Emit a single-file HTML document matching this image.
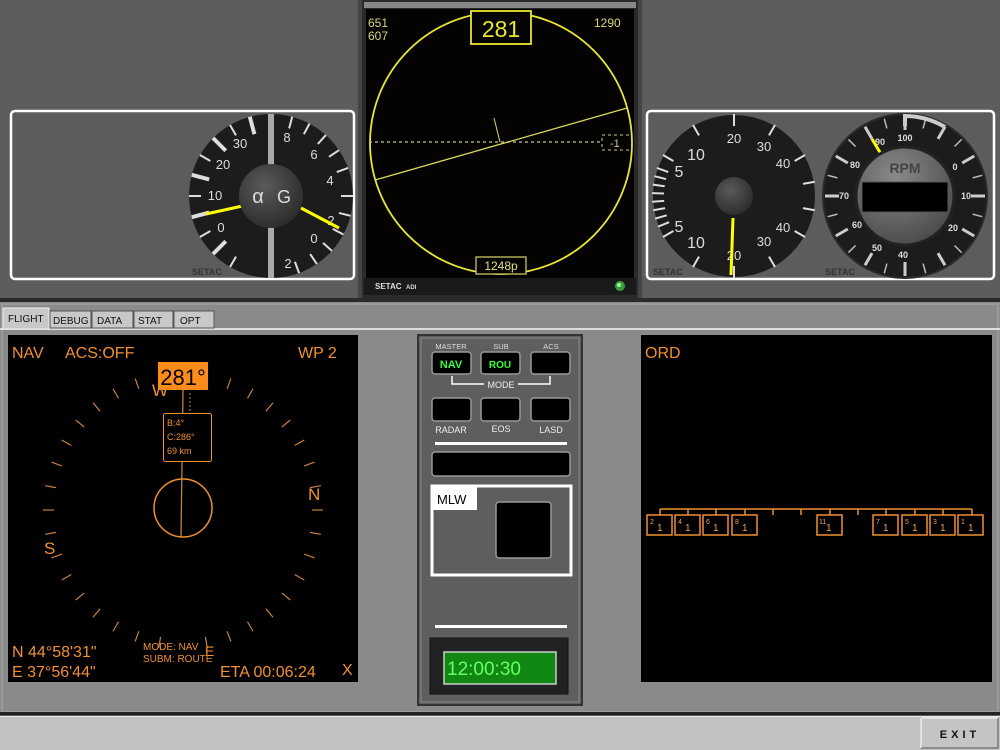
<!DOCTYPE html>
<html><head><meta charset="utf-8"><style>
html,body{margin:0;padding:0;background:#5c5c5c;}
svg{display:block;font-family:"Liberation Sans",sans-serif;}
</style></head><body>
<svg width="1000" height="750" viewBox="0 0 1000 750" xmlns="http://www.w3.org/2000/svg">
<defs>
<line id="ct" x1="183" y1="370" x2="183" y2="381" stroke="#c8803a" stroke-width="1.2"/>
<line id="gt" x1="0" y1="-82" x2="0" y2="-70" stroke="#ddd" stroke-width="2"/>
<line id="gT" x1="0" y1="-82" x2="0" y2="-64" stroke="#ddd" stroke-width="4"/>
<line id="rt" x1="0" y1="-80" x2="0" y2="-70" stroke="#bbb" stroke-width="1.5"/>
<line id="rT" x1="0" y1="-80" x2="0" y2="-66" stroke="#ccc" stroke-width="3"/>
<radialGradient id="knob" cx="0.4" cy="0.35" r="0.7"><stop offset="0" stop-color="#5a5a5a"/><stop offset="1" stop-color="#2a2a2a"/></radialGradient>
<radialGradient id="disc" cx="0.4" cy="0.3" r="0.8"><stop offset="0" stop-color="#8a8a8a"/><stop offset="1" stop-color="#444"/></radialGradient>
</defs>
<rect x="0" y="0" width="1000" height="300" fill="#5d5d5d"/>
<rect x="358" y="0" width="4" height="300" fill="#444"/>
<rect x="638" y="0" width="4" height="300" fill="#444"/>
<rect x="0" y="298" width="1000" height="4" fill="#2a2a2a"/>

<rect x="11" y="111" width="343" height="168" rx="4" fill="#5c5c5c" stroke="#fff" stroke-width="2.5"/>
<g transform="translate(271,196)">
<circle r="82" fill="#1c1c1c"/>
<g>
<use href="#gt" transform="rotate(-150)"/><use href="#gT" transform="rotate(-135)"/><use href="#gt" transform="rotate(-120)"/><use href="#gT" transform="rotate(-105)"/><use href="#gt" transform="rotate(-90)"/><use href="#gT" transform="rotate(-75)"/><use href="#gt" transform="rotate(-60)"/><use href="#gT" transform="rotate(-45)"/><use href="#gt" transform="rotate(-30)"/><use href="#gT" transform="rotate(-15)"/>
<use href="#gt" transform="rotate(15)"/><use href="#gt" transform="rotate(28)"/><use href="#gt" transform="rotate(42)"/><use href="#gt" transform="rotate(56)"/><use href="#gt" transform="rotate(70)"/><use href="#gt" transform="rotate(90)"/><use href="#gt" transform="rotate(104)"/><use href="#gt" transform="rotate(118)"/><use href="#gt" transform="rotate(132)"/><use href="#gt" transform="rotate(146)"/><use href="#gt" transform="rotate(160)"/>
</g>
<rect x="-3" y="-82" width="6" height="164" fill="#aaa"/>
<g fill="#ddd" font-size="13" text-anchor="middle">
<text x="-31" y="-48">30</text><text x="-48" y="-27">20</text><text x="-56" y="4">10</text><text x="-50" y="36">0</text>
<text x="16" y="-54">8</text><text x="43" y="-37">6</text><text x="59" y="-11">4</text><text x="60" y="29">2</text><text x="43" y="47">0</text><text x="17" y="72">2</text>
</g>
<line x1="-24" y1="9" x2="-65" y2="18" stroke="#ff0" stroke-width="3"/>
<line x1="30" y1="12" x2="68" y2="32" stroke="#ff0" stroke-width="3"/>
<circle r="32" fill="url(#knob)"/>
<text x="-13" y="7" fill="#ddd" font-size="20" text-anchor="middle">α</text>
<text x="13" y="7" fill="#ddd" font-size="18" text-anchor="middle">G</text>
</g>
<text x="192" y="275" fill="#333" font-size="9" font-weight="bold">SETAC</text>

<rect x="647" y="111" width="347" height="168" rx="4" fill="#5c5c5c" stroke="#fff" stroke-width="2.5"/>
<g transform="translate(734,196)">
<circle r="81" fill="#1c1c1c"/>
<use href="#gt" transform="rotate(0)"/><use href="#gt" transform="rotate(30)"/><use href="#gt" transform="rotate(60)"/><use href="#gt" transform="rotate(80)"/><use href="#gt" transform="rotate(100)"/><use href="#gt" transform="rotate(120)"/><use href="#gt" transform="rotate(150)"/><use href="#gt" transform="rotate(180)"/><use href="#gt" transform="rotate(-30)"/><use href="#gt" transform="rotate(-60)"/><use href="#gt" transform="rotate(-70)"/><use href="#gt" transform="rotate(-76)"/><use href="#gt" transform="rotate(-82)"/><use href="#gt" transform="rotate(-88)"/><use href="#gt" transform="rotate(-94)"/><use href="#gt" transform="rotate(-100)"/><use href="#gt" transform="rotate(-106)"/><use href="#gt" transform="rotate(-112)"/><use href="#gt" transform="rotate(-120)"/><use href="#gt" transform="rotate(-150)"/>
<g fill="#ddd" font-size="13" text-anchor="middle">
<text x="0" y="-53">20</text><text x="30" y="-45">30</text><text x="49" y="-28">40</text>
<text x="-38" y="-36" font-size="16">10</text><text x="-55" y="-19" font-size="16">5</text><text x="-55" y="36" font-size="16">5</text><text x="-38" y="52" font-size="16">10</text>
<text x="0" y="64">20</text><text x="30" y="50">30</text><text x="49" y="36">40</text>
</g>
<circle r="19" fill="url(#knob)"/>
<line x1="-1" y1="22" x2="-3" y2="79" stroke="#ff0" stroke-width="3"/>
</g>
<text x="653" y="275" fill="#333" font-size="9" font-weight="bold">SETAC</text>
<g transform="translate(905,196)">
<circle r="82" fill="#1c1c1c" stroke="#2a2a2a" stroke-width="2"/>
<use href="#rT" transform="rotate(0)"/><use href="#rT" transform="rotate(30)"/><use href="#rT" transform="rotate(60)"/><use href="#rT" transform="rotate(90)"/><use href="#rT" transform="rotate(120)"/><use href="#rT" transform="rotate(150)"/><use href="#rT" transform="rotate(180)"/><use href="#rT" transform="rotate(-30)"/><use href="#rT" transform="rotate(-60)"/><use href="#rT" transform="rotate(-90)"/><use href="#rT" transform="rotate(-120)"/><use href="#rT" transform="rotate(-150)"/>
<use href="#rt" transform="rotate(15)"/><use href="#rt" transform="rotate(45)"/><use href="#rt" transform="rotate(75)"/><use href="#rt" transform="rotate(105)"/><use href="#rt" transform="rotate(135)"/><use href="#rt" transform="rotate(165)"/><use href="#rt" transform="rotate(-15)"/><use href="#rt" transform="rotate(-45)"/><use href="#rt" transform="rotate(-75)"/><use href="#rt" transform="rotate(-105)"/><use href="#rt" transform="rotate(-135)"/><use href="#rt" transform="rotate(-165)"/>
<path d="M0,-70 L0,-80 A80,80 0 0 1 40,-69" stroke="#ccc" stroke-width="4" fill="none"/>
<g fill="#ddd" font-size="9" font-weight="bold" text-anchor="middle">
<text x="0" y="-55">100</text><text x="50" y="-26">0</text><text x="61" y="3">10</text><text x="48" y="35">20</text><text x="-2" y="62">40</text><text x="-28" y="55">50</text><text x="-48" y="32">60</text><text x="-61" y="3">70</text><text x="-50" y="-28">80</text><text x="-25" y="-51">90</text>
</g>
<line x1="-33" y1="-57" x2="-24" y2="-42" stroke="#ff0" stroke-width="3"/>
<circle r="49" fill="url(#disc)" stroke="#222" stroke-width="3"/>
<text x="0" y="-23" fill="#444" font-size="14" font-weight="bold" text-anchor="middle">RPM</text>
<rect x="-43" y="-14" width="86" height="30" fill="#000" stroke="#555"/>
</g>
<text x="825" y="275" fill="#333" font-size="9" font-weight="bold">SETAC</text>

<rect x="362" y="0" width="276" height="298" fill="#2a2a2a"/>
<rect x="364" y="2" width="272" height="6" fill="#888"/>
<rect x="366" y="9" width="268" height="269" fill="#050202"/>
<rect x="364" y="278" width="272" height="17" fill="#1a1a1a"/>
<text x="375" y="289" fill="#ddd" font-size="8" font-weight="bold">SETAC</text><text x="406" y="289" fill="#ddd" font-size="6" font-weight="bold">ADI</text>
<circle cx="620" cy="286" r="5" fill="#3a9a3a"/><circle cx="619" cy="285" r="2" fill="#9f9"/>
<circle cx="501" cy="143" r="131" fill="none" stroke="#e8e830" stroke-width="1.8"/>
<line x1="369" y1="142" x2="603" y2="142" stroke="#c8c880" stroke-width="1.2" stroke-dasharray="3,3"/>
<rect x="602" y="135" width="30" height="15" fill="none" stroke="#c8c880" stroke-dasharray="3,3"/>
<text x="610" y="147" fill="#c8c880" font-size="11">-1</text>
<line x1="375" y1="180" x2="627" y2="108" stroke="#d8d860" stroke-width="1.3"/>
<line x1="494" y1="118" x2="500" y2="142" stroke="#d8d860" stroke-width="1"/>
<rect x="471" y="11" width="60" height="33" fill="#050202" stroke="#e8e830" stroke-width="1.8"/>
<text x="501" y="37" fill="#e8e830" font-size="23" text-anchor="middle">281</text>
<rect x="476" y="257" width="50" height="17" fill="#050202" stroke="#c8c860" stroke-width="1.3"/>
<text x="501" y="270" fill="#e0e080" font-size="12" text-anchor="middle">1248p</text>
<g fill="#d8d880" font-size="12"><text x="368" y="27">651</text><text x="368" y="40">607</text><text x="594" y="27">1290</text></g>

<rect x="0" y="302" width="1000" height="412" fill="#8a8a8a"/>
<rect x="2" y="304" width="996" height="408" fill="none" stroke="#aaa" stroke-width="1"/>
<rect x="0" y="712" width="1000" height="3" fill="#222"/>
<rect x="0" y="716" width="1000" height="34" fill="#c2c2c2"/>
<rect x="0" y="716" width="1000" height="1" fill="#eee"/>
<rect x="921" y="718" width="77" height="30" fill="#c4c4c4" stroke="#555"/>
<line x1="921" y1="718" x2="998" y2="718" stroke="#fff"/><line x1="921" y1="718" x2="921" y2="748" stroke="#fff"/>
<text x="960" y="738" fill="#111" font-size="11" font-weight="bold" text-anchor="middle" letter-spacing="4">EXIT</text>

<rect x="0" y="328" width="1000" height="2" fill="#ddd"/>
<g font-size="10" fill="#111">
<rect x="3" y="308" width="46" height="21" fill="#c8c8c8" stroke="#eee"/><text x="8" y="322">FLIGHT</text>
<rect x="50" y="311" width="41" height="17" fill="#c8c8c8" stroke="#555"/><text x="53" y="324">DEBUG</text>
<rect x="92" y="311" width="41" height="17" fill="#c8c8c8" stroke="#555"/><text x="97" y="324">DATA</text>
<rect x="134" y="311" width="39" height="17" fill="#c8c8c8" stroke="#555"/><text x="138" y="324">STAT</text>
<rect x="174" y="311" width="40" height="17" fill="#c8c8c8" stroke="#555"/><text x="180" y="324">OPT</text>
</g>

<rect x="8" y="335" width="350" height="347" fill="#000"/>
<g>
<use href="#ct" transform="rotate(0 183 510)"/><use href="#ct" transform="rotate(10 183 510)"/><use href="#ct" transform="rotate(20 183 510)"/><use href="#ct" transform="rotate(30 183 510)"/><use href="#ct" transform="rotate(40 183 510)"/><use href="#ct" transform="rotate(50 183 510)"/><use href="#ct" transform="rotate(60 183 510)"/><use href="#ct" transform="rotate(70 183 510)"/><use href="#ct" transform="rotate(80 183 510)"/><use href="#ct" transform="rotate(90 183 510)"/><use href="#ct" transform="rotate(100 183 510)"/><use href="#ct" transform="rotate(110 183 510)"/><use href="#ct" transform="rotate(120 183 510)"/><use href="#ct" transform="rotate(130 183 510)"/><use href="#ct" transform="rotate(140 183 510)"/><use href="#ct" transform="rotate(150 183 510)"/><use href="#ct" transform="rotate(160 183 510)"/><use href="#ct" transform="rotate(170 183 510)"/><use href="#ct" transform="rotate(190 183 510)"/><use href="#ct" transform="rotate(200 183 510)"/><use href="#ct" transform="rotate(210 183 510)"/><use href="#ct" transform="rotate(220 183 510)"/><use href="#ct" transform="rotate(230 183 510)"/><use href="#ct" transform="rotate(240 183 510)"/><use href="#ct" transform="rotate(250 183 510)"/><use href="#ct" transform="rotate(260 183 510)"/><use href="#ct" transform="rotate(270 183 510)"/><use href="#ct" transform="rotate(280 183 510)"/><use href="#ct" transform="rotate(290 183 510)"/><use href="#ct" transform="rotate(300 183 510)"/><use href="#ct" transform="rotate(310 183 510)"/><use href="#ct" transform="rotate(320 183 510)"/><use href="#ct" transform="rotate(330 183 510)"/><use href="#ct" transform="rotate(340 183 510)"/><use href="#ct" transform="rotate(350 183 510)"/>
</g>
<g fill="#f09030" font-size="16">
<text x="12" y="358">NAV</text><text x="65" y="358">ACS:OFF</text><text x="298" y="358">WP 2</text>
<text x="152" y="396" font-size="17">W</text><text x="308" y="500" font-size="17">N</text><text x="44" y="554" font-size="17">S</text><text x="205" y="656" font-size="14">E</text>
<text x="12" y="657">N 44°58'31"</text><text x="12" y="677">E 37°56'44"</text>
<text x="220" y="677">ETA 00:06:24</text><text x="342" y="675">X</text>
</g>
<g fill="#f09030" font-size="10"><text x="143" y="650">MODE: NAV</text><text x="143" y="662">SUBM: ROUTE</text></g>
<line x1="183" y1="390" x2="181" y2="537" stroke="#c08040" stroke-width="1.3"/>
<line x1="190" y1="393" x2="190" y2="413" stroke="#c08040" stroke-width="1" stroke-dasharray="2,2"/>
<rect x="158" y="362" width="50" height="28" fill="#ff8c1a"/>
<text x="183" y="385" fill="#000" font-size="22" text-anchor="middle">281°</text>
<rect x="163.5" y="413.5" width="48" height="48" rx="2" fill="#000" stroke="#f09030"/>
<g fill="#f09030" font-size="9"><text x="167" y="426">B:4°</text><text x="167" y="440">C:286°</text><text x="167" y="454">69 km</text></g>
<circle cx="183" cy="508" r="29" fill="none" stroke="#f09030" stroke-width="1.5"/>

<rect x="418" y="335" width="164" height="370" fill="#5e5e5e" stroke="#333" stroke-width="2"/>
<rect x="421" y="338" width="158" height="364" fill="none" stroke="#888"/>
<g fill="#ddd" font-size="7.5" text-anchor="middle"><text x="451" y="349">MASTER</text><text x="501" y="349">SUB</text><text x="551" y="349">ACS</text></g>
<g stroke="#999" stroke-width="1.5" fill="#000">
<rect x="432" y="352" width="39" height="22" rx="3"/><rect x="481" y="352" width="39" height="22" rx="3"/><rect x="531" y="352" width="39" height="22" rx="3"/>
<rect x="432" y="398" width="39" height="23" rx="3"/><rect x="481" y="398" width="39" height="23" rx="3"/><rect x="531" y="398" width="39" height="23" rx="3"/>
<rect x="432" y="452" width="138" height="24" rx="3"/>
</g>
<text x="451" y="368" fill="#3f3" font-size="11" font-weight="bold" text-anchor="middle">NAV</text>
<text x="500" y="368" fill="#3f3" font-size="10" font-weight="bold" text-anchor="middle">ROU</text>
<path d="M452,376 V384 H484 M518,384 H550 V376" stroke="#fff" stroke-width="1.5" fill="none"/>
<text x="501" y="388" fill="#eee" font-size="9" text-anchor="middle">MODE</text>
<g fill="#eee" font-size="9" text-anchor="middle"><text x="451" y="433">RADAR</text><text x="501" y="432">EOS</text><text x="551" y="433">LASD</text></g>
<rect x="435" y="442" width="132" height="3" fill="#fff"/>
<rect x="432" y="486" width="139" height="89" fill="#5e5e5e" stroke="#fff" stroke-width="3"/>
<rect x="432" y="487" width="45" height="23" fill="#fff"/>
<text x="437" y="504" fill="#000" font-size="13">MLW</text>
<rect x="496" y="502" width="55" height="56" rx="3" fill="#000" stroke="#999" stroke-width="1.5"/>
<rect x="435" y="625" width="132" height="3" fill="#fff"/>
<rect x="430" y="638" width="138" height="56" fill="#222" stroke="#111"/>
<rect x="444" y="652" width="112" height="32" fill="#118811" stroke="#ccc" stroke-width="1.5"/>
<text x="447" y="675" fill="#6f6" font-size="19">12:00:30</text>

<rect x="641" y="335" width="351" height="347" fill="#000"/>
<text x="645" y="358" fill="#f09030" font-size="16">ORD</text>
<g stroke="#f09030" stroke-width="1.5" fill="none">
<line x1="660" y1="509" x2="972" y2="509"/>
<path d="M660,509v6 M688,509v6 M716,509v6 M745,509v6 M773,509v6 M801,509v6 M830,509v6 M858,509v6 M886,509v6 M915,509v6 M943,509v6 M972,509v6"/>
<rect x="647" y="515" width="25" height="20"/><rect x="675" y="515" width="25" height="20"/><rect x="703" y="515" width="25" height="20"/><rect x="732" y="515" width="25" height="20"/>
<rect x="817" y="515" width="25" height="20"/>
<rect x="873" y="515" width="25" height="20"/><rect x="902" y="515" width="25" height="20"/><rect x="930" y="515" width="25" height="20"/><rect x="958" y="515" width="25" height="20"/>
</g>
<g fill="#f0a050" font-size="7"><text x="650" y="524">2</text><text x="678" y="524">4</text><text x="706" y="524">6</text><text x="735" y="524">8</text><text x="819" y="524">11</text><text x="876" y="524">7</text><text x="905" y="524">5</text><text x="933" y="524">3</text><text x="961" y="524">1</text></g>
<g fill="#f0a050" font-size="10"><text x="657" y="531">1</text><text x="685" y="531">1</text><text x="713" y="531">1</text><text x="742" y="531">1</text><text x="826" y="531">1</text><text x="883" y="531">1</text><text x="912" y="531">1</text><text x="940" y="531">1</text><text x="968" y="531">1</text></g>
</svg>
</body></html>
